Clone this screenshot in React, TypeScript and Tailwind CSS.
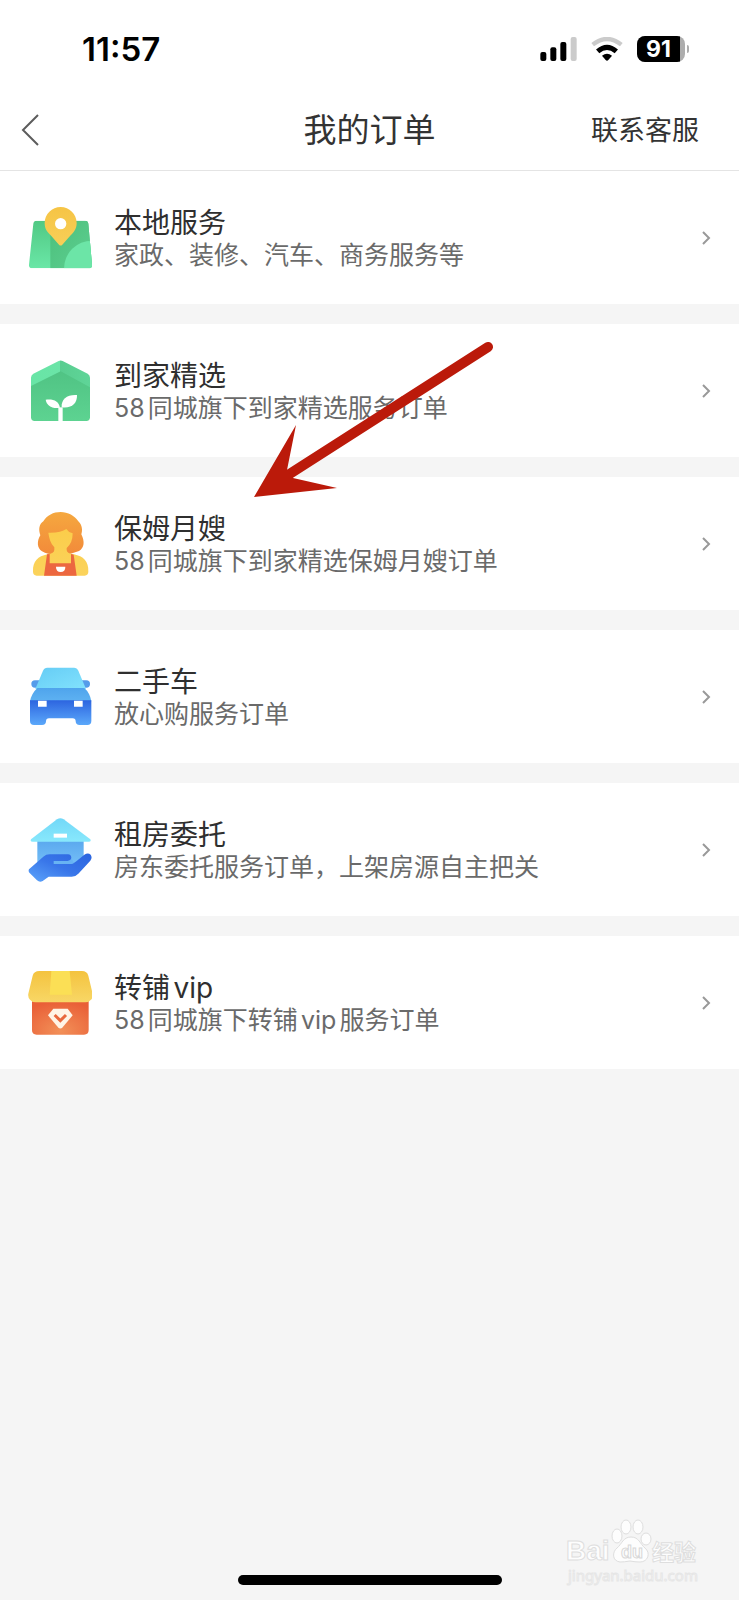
import type { ReactNode } from 'react'

function MapIcon() {
  return (
    <svg className="size-16 shrink-0" viewBox="54 48 192 192" aria-hidden="true">
      <defs>
        <linearGradient id="mapLeft" x1="0" y1="0" x2="0" y2="1">
          <stop offset="0" stopColor="#50c883" />
          <stop offset="1" stopColor="#6be8a8" />
        </linearGradient>
        <linearGradient id="mapRight" x1="0" y1="0" x2="1" y2="1">
          <stop offset="0" stopColor="#4bbf7b" />
          <stop offset="1" stopColor="#5fd092" />
        </linearGradient>
        <linearGradient id="mapPin" x1="0" y1="0" x2="0" y2="1">
          <stop offset="0" stopColor="#f6c445" />
          <stop offset="1" stopColor="#f7cf58" />
        </linearGradient>
        <clipPath id="mapShape">
          <path d="M80 92H225Q234 92 235 101L246 224Q247 235 236 235H67Q56 235 57 224L70 101Q71 92 80 92Z" />
        </clipPath>
      </defs>
      <g clipPath="url(#mapShape)">
        <path d="M54 90H246V240H54Z" fill="url(#mapLeft)" />
        <path d="M121 90H250V240H121Z" fill="url(#mapRight)" />
        <circle cx="246" cy="236" r="84" fill="#6ce5a7" />
      </g>
      <path
        d="M152 51C178 51 200 72 200 99C200 117 191 127 182 136L157 164Q152 169 147 164L122 136C112 126 104 117 104 99C104 72 126 51 152 51Z"
        fill="url(#mapPin)"
      />
      <circle cx="152" cy="101" r="17" fill="#fff" />
    </svg>
  )
}

function HomeIcon() {
  return (
    <svg className="size-16 shrink-0" viewBox="54 43 192 192" aria-hidden="true">
      <defs>
        <linearGradient id="homeBody" x1="0" y1="0" x2="0" y2="1">
          <stop offset="0" stopColor="#4fc283" />
          <stop offset="1" stopColor="#5dd391" />
        </linearGradient>
        <linearGradient id="homeRoof" x1="0" y1="0" x2="1" y2="0">
          <stop offset="0" stopColor="#68e5a6" />
          <stop offset="0.5" stopColor="#6be4a7" />
          <stop offset="0.5" stopColor="#59cd90" />
          <stop offset="1" stopColor="#5fd598" />
        </linearGradient>
      </defs>
      <path d="M63 110L152 68L240 110V218Q240 229 229 229H74Q63 229 63 218Z" fill="url(#homeBody)" />
      <path d="M63 124V99Q63 91 70 87L146 49Q152 46 158 49L233 87Q240 91 240 99V128L152 80Z" fill="url(#homeRoof)" />
      <path d="M145 229V188H158V229Z" fill="#fff" />
      <path d="M150 189C126 193 110 183 107 165C130 162 146 169 150 189Z" fill="#fff" />
      <path d="M155 188C153 163 172 149 201 151C202 175 186 192 155 188Z" fill="#fff" />
    </svg>
  )
}

function NannyIcon() {
  return (
    <svg className="size-16 shrink-0" viewBox="54 51 192 192" aria-hidden="true">
      <defs>
        <linearGradient id="nannyHair" x1="0" y1="0" x2="0" y2="1">
          <stop offset="0" stopColor="#f5a83f" />
          <stop offset="1" stopColor="#f28a3a" />
        </linearGradient>
        <linearGradient id="nannySkin" x1="0" y1="0" x2="0" y2="1">
          <stop offset="0" stopColor="#fbcd4a" />
          <stop offset="1" stopColor="#fbd35c" />
        </linearGradient>
      </defs>
      <path
        d="M152 51C174 51 194 62 205 79C217 90 218 107 214 118C225 140 223 159 207 168Q180 180 152 178Q118 182 96 169C81 160 80 139 91 121C85 103 87 88 100 79C111 61 130 51 152 51Z"
        fill="url(#nannyHair)"
      />
      <path
        d="M69 230C68 198 84 184 112 178Q133 175 133 164V157C122 145 117 130 115 113Q153 114 169 102Q175 112 188 115Q188 144 170 159V165Q171 176 192 178C220 184 236 198 235 230Q235 240 224 242H80Q69 240 69 230Z"
        fill="url(#nannySkin)"
      />
      <path d="M111 178L119 177V205H183V177L191 179L200 242H102Z" fill="#ec6740" />
      <path d="M138 215H166Q166 231 152 231Q138 231 138 215Z" fill="#fff" />
    </svg>
  )
}

function CarIcon() {
  return (
    <svg className="size-16 shrink-0" viewBox="54 46 192 192" aria-hidden="true">
      <defs>
        <linearGradient id="carTop" x1="0" y1="0" x2="1" y2="1">
          <stop offset="0" stopColor="#65ccf5" />
          <stop offset="1" stopColor="#82e2fd" />
        </linearGradient>
        <linearGradient id="carHood" x1="0" y1="0" x2="0" y2="1">
          <stop offset="0" stopColor="#4fa4ec" />
          <stop offset="1" stopColor="#5eb2f2" />
        </linearGradient>
        <linearGradient id="carFront" x1="0" y1="0" x2="0" y2="1">
          <stop offset="0" stopColor="#2d65e0" />
          <stop offset="1" stopColor="#5ba8fa" />
        </linearGradient>
      </defs>
      <rect x="64" y="92" width="40" height="22" rx="11" fill="#559cea" />
      <rect x="200" y="92" width="40" height="22" rx="11" fill="#559cea" />
      <path d="M112 54H192Q201 54 205 63L228 118H76L99 63Q103 54 112 54Z" fill="url(#carTop)" />
      <path d="M82 115H223Q240 130 244 155H60Q64 132 82 115Z" fill="url(#carHood)" />
      <path
        d="M60 152H244V214Q244 226 232 226H209Q197 226 197 215Q197 206 188 206H117Q108 206 108 215Q108 226 96 226H72Q60 226 60 214Z"
        fill="url(#carFront)"
      />
      <path d="M84 153H110V171H84ZM192 153H218V171H192Z" fill="#fff" />
    </svg>
  )
}

function RentIcon() {
  return (
    <svg className="size-16 shrink-0" viewBox="54 52 192 192" aria-hidden="true">
      <defs>
        <linearGradient id="rentRoof" x1="0" y1="0" x2="0" y2="1">
          <stop offset="0" stopColor="#72d8f8" />
          <stop offset="1" stopColor="#88e8fc" />
        </linearGradient>
        <linearGradient id="rentWall" x1="0" y1="0" x2="0" y2="1">
          <stop offset="0" stopColor="#5aa8ee" />
          <stop offset="1" stopColor="#77c1f8" />
        </linearGradient>
        <linearGradient id="rentHand" x1="1" y1="0" x2="0" y2="1">
          <stop offset="0" stopColor="#2b64df" />
          <stop offset="0.5" stopColor="#3976e9" />
          <stop offset="1" stopColor="#5da5fb" />
        </linearGradient>
      </defs>
      <path d="M82 118H221V200H82Z" fill="url(#rentWall)" />
      <path d="M63 116L141 56Q151 49 161 56L241 116Q244 123 236 123H68Q60 123 63 116Z" fill="url(#rentRoof)" />
      <path d="M131 99H171V111H131Z" fill="#fff" />
      <path
        d="M57 206L100 168Q108 161 119 161H174Q184 162 184 172Q183 181 172 181H135V188H186Q193 188 199 182L223 162Q234 155 242 162Q248 171 241 180L205 219Q197 228 185 228H116L98 241Q89 246 81 239L59 217Q54 211 57 206Z"
        fill="url(#rentHand)"
      />
      <path d="M131 181H172Q184 180 184 171L192 187Q188 190 184 190H131Z" fill="#68b3f3" />
    </svg>
  )
}

function ShopIcon() {
  return (
    <svg className="size-16 shrink-0" viewBox="54 46 192 192" aria-hidden="true">
      <defs>
        <radialGradient id="shopBox" cx="0.5" cy="0.9" r="0.8">
          <stop offset="0" stopColor="#f29058" />
          <stop offset="1" stopColor="#e95f37" />
        </radialGradient>
        <linearGradient id="shopLid" x1="0" y1="0" x2="0" y2="1">
          <stop offset="0" stopColor="#f4c33f" />
          <stop offset="1" stopColor="#f8d766" />
        </linearGradient>
      </defs>
      <path d="M66 125H236V223Q236 237 222 237H80Q66 237 66 223Z" fill="url(#shopBox)" />
      <path
        d="M88 46H216Q231 46 235 60L248 114Q250 125 243 132Q236 140 226 140H77Q66 140 60 132Q53 125 55 114L68 60Q72 46 88 46Z"
        fill="url(#shopLid)"
      />
      <path d="M124 46H179L186 117H119Z" fill="#fbdf55" />
      <path d="M130 159H173L188 179L158 215Q151 222 144 215L114 179Z" fill="#fff4e6" />
      <path d="M134 178L151 195L168 178" fill="none" stroke="#e9683d" strokeWidth="9" />
    </svg>
  )
}

type Order = { title: string; desc: string; icon: ReactNode }

const orders: Order[] = [
  { title: '本地服务', desc: '家政、装修、汽车、商务服务等', icon: <MapIcon /> },
  { title: '到家精选', desc: '58同城旗下到家精选服务订单', icon: <HomeIcon /> },
  { title: '保姆月嫂', desc: '58同城旗下到家精选保姆月嫂订单', icon: <NannyIcon /> },
  { title: '二手车', desc: '放心购服务订单', icon: <CarIcon /> },
  { title: '租房委托', desc: '房东委托服务订单，上架房源自主把关', icon: <RentIcon /> },
  { title: '转铺vip', desc: '58同城旗下转铺vip服务订单', icon: <ShopIcon /> }
]

function StatusBar() {
  return (
    <div className="flex h-[90px] items-center justify-between pt-2 pr-[50px] pl-[82px] text-black">
      <span className="text-[33px] leading-none font-semibold">11:57</span>
      <div className="flex items-center">
        <svg className="mr-[14px] h-6 w-[37px]" viewBox="515 111 111 72" aria-hidden="true">
          <rect x="516" y="156" width="18" height="27" rx="6" />
          <rect x="546" y="142" width="18" height="41" rx="6" />
          <rect x="576" y="126" width="18" height="57" rx="6" />
          <rect x="607" y="111" width="18" height="72" rx="6" fill="#cbcbcb" />
        </svg>
        <svg className="mr-[14px] h-6 w-8" viewBox="667 111 96 72" aria-hidden="true">
          <g fill="none" strokeWidth="13">
            <path d="M672 134Q715 100 758 134" stroke="#cbcbcb" />
            <path d="M687 154Q715 130 743 154" stroke="#000" strokeWidth="15" />
          </g>
          <path d="M700 167Q715 155 730 167L719 180Q715 184 711 180Z" />
        </svg>
        <div className="flex h-[26px] w-12 items-stretch overflow-hidden rounded-lg bg-[#adadad]">
          <span className="flex w-[43px] items-center justify-center bg-black text-[23px] leading-none font-bold text-white">
            91
          </span>
        </div>
        <span className="ml-0.5 h-2 w-0.5 rounded-r-full bg-[#adadad]" />
      </div>
    </div>
  )
}

function Watermark() {
  return (
    <svg
      className="absolute right-9 bottom-[12px] h-[72px] w-[138px]"
      viewBox="0 0 138 72"
      fill="#fdfdfd"
      stroke="#dedede"
      strokeWidth="1"
      fontFamily="'Liberation Sans', 'Noto Sans CJK SC', sans-serif"
      role="img"
      aria-label="Baidu经验"
    >
      <text x="1" y="44" fontSize="28" fontWeight="700">Bai</text>
      <ellipse cx="52" cy="20" rx="5" ry="7" />
      <ellipse cx="61" cy="11" rx="5" ry="7" />
      <ellipse cx="73" cy="11" rx="5" ry="7" />
      <ellipse cx="81" cy="23" rx="5" ry="6" />
      <path d="M66 21C74 21 75 28 80 32C86 37 83 46 75 46Q70 46 65 45Q59 46 55 46C47 45 47 36 52 32C57 28 58 21 66 21Z" />
      <text x="56" y="42" fontSize="18" fontWeight="700" stroke="#d8d8d8">du</text>
      <text x="87" y="44" fontSize="22" fontWeight="700">经验</text>
      <text x="3" y="65" fontSize="15" stroke="#e6e6e6" fontFamily="'Noto Sans', sans-serif">jingyan.baidu.com</text>
    </svg>
  )
}

export default function App() {
  return (
    <div
      lang="zh-CN"
      className="relative flex min-h-screen flex-col bg-[#f5f5f5] font-['Inter','Noto_Sans_CJK_SC',sans-serif] [text-autospace:normal]"
    >
      <header className="border-b border-[#e4e4e4] bg-white text-[#333]">
        <StatusBar />
        <nav className="grid h-20 grid-cols-[1fr_auto_1fr] items-center px-5">
          <button type="button" aria-label="返回" className="justify-self-start">
            <svg className="h-8 w-5" viewBox="0 0 20 32" fill="none" stroke="#5c5c5c" strokeWidth="2" aria-hidden="true">
              <path d="M18 1L3 16L18 31" />
            </svg>
          </button>
          <h1 className="text-[33px] leading-none">我的订单</h1>
          <button type="button" className="mr-5 justify-self-end text-[27px] leading-none">
            联系客服
          </button>
        </nav>
      </header>

      <main className="flex flex-col gap-5">
        {orders.map(order => (
          <a key={order.title} href="#" className="flex items-center bg-white pt-[34px] pr-[27px] pb-[33px] pl-7">
            {order.icon}
            <div className="ml-[22px] flex-1 pt-0.5">
              <h2 className="text-[28px] leading-8 text-[#2f2f2f]">{order.title}</h2>
              <p className="text-[25px] leading-8 text-[#6a6a6a]">{order.desc}</p>
            </div>
            <svg className="h-4 w-3" viewBox="0 0 12 16" fill="none" stroke="#999" strokeWidth="2" aria-hidden="true">
              <path d="M3 2L9 8L3 14" />
            </svg>
          </a>
        ))}
      </main>

      <svg
        className="pointer-events-none absolute top-[340px] left-[254px] h-[158px] w-[240px]"
        viewBox="254 340 240 158"
        fill="#bb1a0a"
        aria-hidden="true"
      >
        <path d="M288 475L488 347" stroke="#bb1a0a" strokeWidth="10" strokeLinecap="round" />
        <path d="M254 497L296 425L287 470L293 478L337 488Z" />
      </svg>

      <Watermark />
      <div className="mx-auto mt-auto mb-[15px] h-[10px] w-[264px] rounded-full bg-black" />
    </div>
  )
}
